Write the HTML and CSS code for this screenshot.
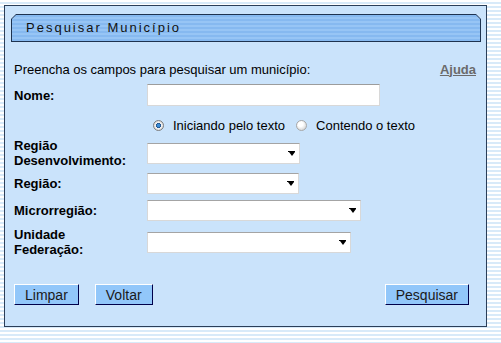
FILE: index.html
```html
<!DOCTYPE html>
<html>
<head>
    <title>Pesquisar Município</title>
    <link rel="stylesheet" href="styles.css">
</head>
<body>
<div class="panel">
    <div class="titlebar">
        <div class="titlebar-inner">Pesquisar Município</div>
    </div>

    <form class="form" action="#" method="post">
        <div class="row intro">
            <span>Preencha os campos para pesquisar um município:</span>
            <a href="#" class="help">Ajuda</a>
        </div>

        <div class="row row-nome">
            <label class="lbl">Nome:</label>
            <input type="text" class="txt" name="nome" autofocus>
        </div>

        <div class="row row-radio">
            <label class="opt"><input type="radio" name="tipo" checked>Iniciando pelo texto</label>
            <label class="opt"><input type="radio" name="tipo">Contendo o texto</label>
        </div>

        <div class="row row-2l">
            <label class="lbl">Região<br>Desenvolvimento:</label>
            <div class="sel w153"><select name="regiao_desenv"><option></option></select></div>
        </div>

        <div class="row row-regiao">
            <label class="lbl">Região:</label>
            <div class="sel w152"><select name="regiao"><option></option></select></div>
        </div>

        <div class="row row-micro">
            <label class="lbl">Microrregião:</label>
            <div class="sel w214"><select name="microrregiao"><option></option></select></div>
        </div>

        <div class="row row-2l row-uf">
            <label class="lbl">Unidade<br>Federação:</label>
            <div class="sel w204"><select name="uf"><option></option></select></div>
        </div>

        <div class="row buttons">
            <button type="reset">Limpar</button>
            <button type="button" class="back">Voltar</button>
            <button type="submit" class="search">Pesquisar</button>
        </div>
    </form>
</div>
</body>
</html>
```

FILE: styles.css
```css
body {
    margin: 0;
    font-family: "Liberation Sans", Arial, sans-serif;
    font-size: 13px;
    color: #000;
    background: repeating-linear-gradient(#ffffff 0 2px, #d8eaf9 2px 4px);
    height: 343px;
    overflow: hidden;
}
.panel {
    margin: 5px 0 0 4px;
    width: 481px;
    height: 320px;
    border: 1px solid #2b3e58;
    background-color: #cae3fb;
}
.titlebar {
    margin: 8px 0 0 6px;
    width: 470px;
    height: 28px;
    background-color: #1e3350;
    clip-path: polygon(5px 0, calc(100% - 5px) 0, 100% 5px, 100% 100%, 0 100%, 0 5px);
}
.titlebar-inner {
    position: relative;
    top: 1px;
    left: 1px;
    width: 454px;
    height: 26px;
    padding-left: 14px;
    line-height: 26px;
    letter-spacing: 2px;
    color: #111;
    background: repeating-linear-gradient(#86b9f0 0 2px, #97c5f5 2px 4px);
    clip-path: polygon(4px 0, calc(100% - 4px) 0, 100% 4px, 100% 100%, 0 100%, 0 4px);
}
.form {
    padding: 0 10px 0 9px;
}
.row {
    display: flex;
    align-items: center;
}
.intro {
    margin-top: 18px;
    height: 18px;
    justify-content: space-between;
}
.help {
    font-weight: bold;
    color: #6b6b6b;
}
.lbl {
    width: 133px;
    font-weight: bold;
    line-height: 15px;
}
.row-nome {
    margin-top: 5px;
    height: 24px;
}
.txt {
    width: 233px;
    height: 22px;
    box-sizing: border-box;
    border: 1px solid #d8d8d8;
    border-top-color: #9c9c9c;
    background: #fff;
    margin: 0;
    padding: 0 3px;
    font-family: inherit;
    font-size: 13px;
    caret-color: #000;
}
.txt:focus {
    outline: none;
}
.row-radio {
    margin-top: 8px;
    height: 20px;
    padding-left: 139px;
    gap: 11px;
}
.opt {
    display: flex;
    align-items: center;
    gap: 9px;
}
.opt input {
    appearance: none;
    margin: 0;
    width: 11px;
    height: 11px;
    border-radius: 50%;
    border: 1px solid #a8a8a8;
    background: radial-gradient(circle at 40% 35%, #ffffff 0 30%, #d6d6d6 80%);
}
.opt input:checked {
    border-color: #7d7d7d;
    background: radial-gradient(circle at 50% 50%, #3c8ed6 0 20%, #1c4f8c 36%, #f4f4f4 42%, #cfcfcf 90%);
}
.row-2l {
    margin-top: 2px;
    height: 32px;
}
.row-regiao {
    margin-top: 4px;
    height: 21px;
}
.row-micro {
    margin-top: 6px;
    height: 21px;
}
.row-uf {
    margin-top: 5px;
}
.sel {
    position: relative;
    height: 21px;
}
.sel select {
    appearance: none;
    width: 100%;
    height: 21px;
    margin: 0;
    border: 1px solid #d8d8d8;
    border-top-color: #a4a4a4;
    background: #fff;
    font-family: inherit;
    font-size: 13px;
}
.sel::after {
    content: "";
    position: absolute;
    right: 5px;
    top: 9px;
    border-left: 3.5px solid transparent;
    border-right: 3.5px solid transparent;
    border-top: 4px solid #000;
}
.sel::before {
    content: "";
    position: absolute;
    right: 5px;
    top: 8px;
    width: 7px;
    height: 1px;
    background: #000;
}
.w153 { width: 153px; }
.w152 { width: 152px; }
.w214 { width: 214px; }
.w204 { width: 204px; }
.buttons {
    margin-top: 26px;
    height: 21px;
}
button {
    height: 21px;
    padding: 0 10px;
    margin: 0;
    font-family: inherit;
    font-size: 14px;
    color: #1a1a1a;
    background-color: #92c7fa;
    border: 1px solid #00004a;
    border-top-color: #ffffff;
    border-left-color: #ffffff;
    cursor: pointer;
}
.back {
    margin-left: 16px;
}
.search {
    margin-left: auto;
    margin-right: 7px;
}
```
